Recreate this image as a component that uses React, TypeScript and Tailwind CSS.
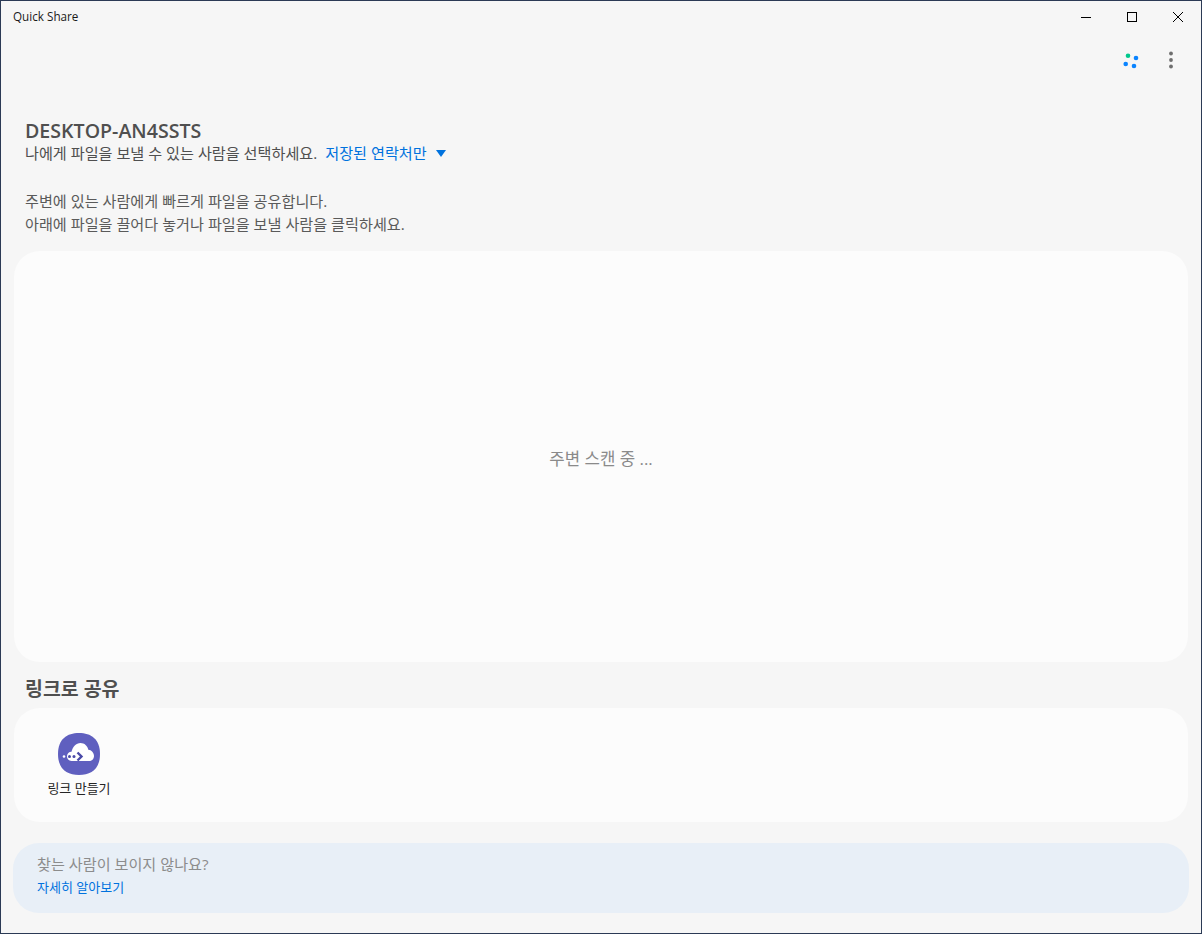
const font = "font-['Open_Sans','Noto_Sans_CJK_KR',sans-serif]";

function CloudLinkIcon() {
  return (
    <svg width="42" height="42" viewBox="0 0 42 42">
      <path
        d="M21 0C33 0 42 6 42 21C42 36 33 42 21 42C9 42 0 36 0 21C0 6 9 0 21 0Z"
        fill="#5f5fbf"
      />
      <path
        d="M13.500 28C10.800 28 9 25.800 9 23.300C9 20.800 11 18.800 13.500 18.800C14.800 13.800 18 10 22.500 10C26.500 10 29.500 12.800 30.300 16.800C33.500 17 36 19.800 36 23C36 26 33.800 28 31 28Z"
        fill="#ffffff"
      />
      <circle cx="6" cy="23.500" r="1.300" fill="#ffffff" />
      <circle cx="11.500" cy="23.500" r="1.500" fill="#4a4aa8" />
      <circle cx="16" cy="23.500" r="1.500" fill="#4a4aa8" />
      <path d="M19.500 19.500L23.500 23.500L19.500 27.500" fill="none" stroke="#4a4aa8" strokeWidth="2.400" />
    </svg>
  );
}

export default function App() {
  return (
    <div className={`${font} w-[1202px] h-[934px] flex flex-col bg-[#f6f6f6] border border-[#2b3a55] overflow-hidden`}>
      {/* title bar */}
      <div className="h-[31px] shrink-0 flex items-center justify-between">
        <span className="pl-3 text-[11.7px] text-[#1a1a1a]">Quick Share</span>
        <div className="flex text-black">
          <button className="w-[46px] h-[31px] flex items-center justify-center">
            <svg width="10" height="10" viewBox="0 0 10 10"><path d="M0 5.500H10" stroke="currentColor" /></svg>
          </button>
          <button className="w-[46px] h-[31px] flex items-center justify-center">
            <svg width="10" height="10" viewBox="0 0 10 10"><rect x="0.500" y="0.500" width="9" height="9" fill="none" stroke="currentColor" /></svg>
          </button>
          <button className="w-[46px] h-[31px] flex items-center justify-center">
            <svg width="10" height="10" viewBox="0 0 10 10"><path d="M0 0L10 10M10 0L0 10" stroke="currentColor" /></svg>
          </button>
        </div>
      </div>

      {/* toolbar icons */}
      <div className="h-[87px] shrink-0 flex justify-end items-start gap-[29px] pr-[28px] pt-[19px]">
        <svg width="18" height="18" viewBox="0 0 18 18">
          <circle cx="6" cy="4.700" r="2.300" fill="#00c88c" />
          <circle cx="14" cy="7" r="2.300" fill="#0a84ff" />
          <circle cx="3.700" cy="13" r="2.300" fill="#0a84ff" />
          <circle cx="12" cy="15" r="2.300" fill="#0a84ff" />
        </svg>
        <svg width="4" height="18" viewBox="0 0 4 18">
          <circle cx="2" cy="2.500" r="1.900" fill="#6e6e6e" />
          <circle cx="2" cy="9" r="1.900" fill="#6e6e6e" />
          <circle cx="2" cy="15.500" r="1.900" fill="#6e6e6e" />
        </svg>
      </div>

      {/* device heading */}
      <div className="pl-6 shrink-0">
        <h1 className="text-[19.6px] leading-[24px] font-semibold text-[#4f4f4f]">DESKTOP-AN4SSTS</h1>
        <div className="flex items-center text-[15.15px] leading-[20px] text-[#4f4f4f]">
          <span>나에게 파일을 보낼 수 있는 사람을 선택하세요.</span>
          <span className="ml-2 text-[#0072de]">저장된 연락처만</span>
          <span className="ml-[9px] w-0 h-0 border-x-[5px] border-x-transparent border-t-[7px] border-t-[#0072de]" />
        </div>
        <p className="mt-[27px] text-[15.15px] leading-[23px] text-[#5a5a5a]">
          주변에 있는 사람에게 빠르게 파일을 공유합니다.
          <br />
          아래에 파일을 끌어다 놓거나 파일을 보낼 사람을 클릭하세요.
        </p>
      </div>

      {/* scan area */}
      <div className="mt-[15px] mx-[13px] h-[411px] shrink-0 rounded-[26px] bg-[#fcfcfc] flex items-center justify-center pt-[4px]">
        <span className="text-[16.8px] text-[#8a8a8a]">주변 스캔 중 ...</span>
      </div>

      <h2 className="mt-[13px] pl-6 text-[19.45px] leading-[28px] font-semibold text-[#4f4f4f] shrink-0">링크로 공유</h2>

      {/* link card */}
      <div className="mt-[5px] mx-[13px] h-[114px] shrink-0 rounded-[26px] bg-[#fcfcfc] pl-[24px] pt-[25px]">
        <div className="w-[82px] flex flex-col items-center">
          <CloudLinkIcon />
          <span className="mt-[4px] text-[13px] leading-[18px] text-[#252525]">링크 만들기</span>
        </div>
      </div>

      {/* help banner */}
      <div className="mt-[21px] mx-[12px] h-[70px] shrink-0 rounded-[26px] bg-[#e8eff7] pl-6 pt-[10px]">
        <p className="text-[15.15px] leading-[22px] text-[#8c8c8c]">찾는 사람이 보이지 않나요?</p>
        <a className="block mt-[3px] text-[13px] leading-[18px] text-[#0072de]">자세히 알아보기</a>
      </div>
    </div>
  );
}
